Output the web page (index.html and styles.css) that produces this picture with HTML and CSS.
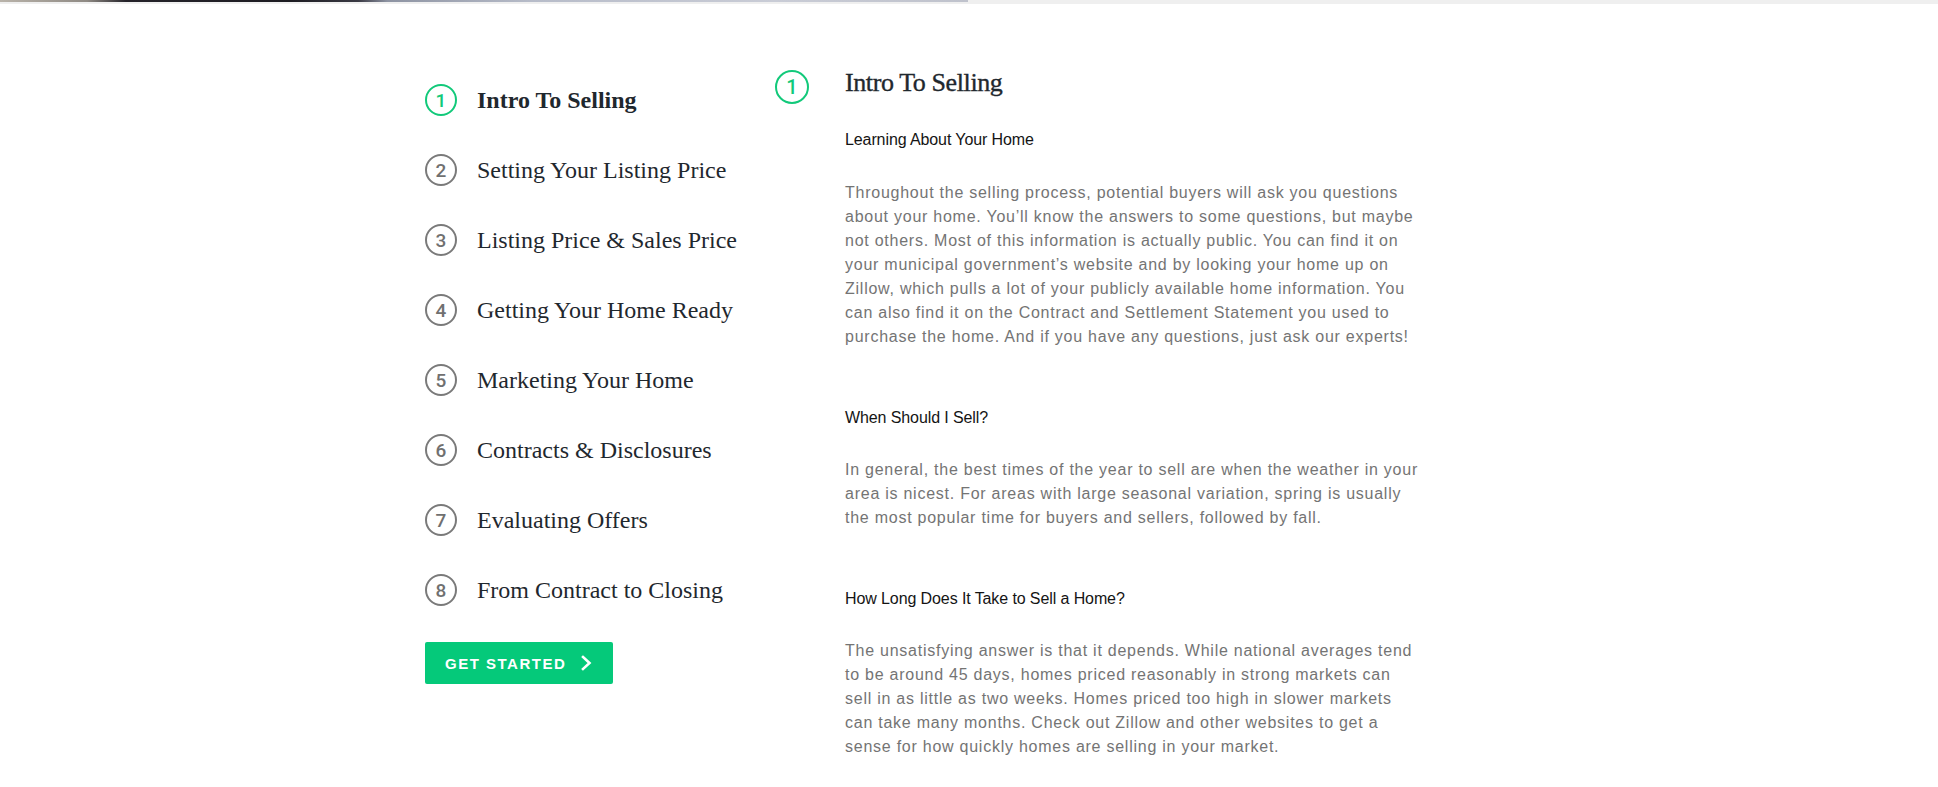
FILE: index.html
```html
<!DOCTYPE html>
<html lang="en">
<head>
<meta charset="utf-8">
<title>Intro To Selling</title>
<link rel="stylesheet" href="styles.css">
</head>
<body>
<div class="topbar"><div class="topbar-strip"></div></div>
<main class="page">
  <aside class="sidebar">
    <ol class="steps">
      <li class="step step-active"><span class="num">1</span><span class="step-label">Intro To Selling</span></li>
      <li class="step"><span class="num">2</span><span class="step-label">Setting Your Listing Price</span></li>
      <li class="step"><span class="num">3</span><span class="step-label">Listing Price &amp; Sales Price</span></li>
      <li class="step"><span class="num">4</span><span class="step-label">Getting Your Home Ready</span></li>
      <li class="step"><span class="num">5</span><span class="step-label">Marketing Your Home</span></li>
      <li class="step"><span class="num">6</span><span class="step-label">Contracts &amp; Disclosures</span></li>
      <li class="step"><span class="num">7</span><span class="step-label">Evaluating Offers</span></li>
      <li class="step"><span class="num">8</span><span class="step-label">From Contract to Closing</span></li>
    </ol>
    <a class="btn" href="#">GET STARTED
      <svg class="chev" width="11" height="16" viewBox="0 0 11 16"><path d="M2 2 L8.5 8 L2 14" fill="none" stroke="#fff" stroke-width="2.6" stroke-linecap="square"/></svg>
    </a>
  </aside>
  <section class="content">
    <span class="num num-lg num-active">1</span>
    <div class="article">
      <h1 class="title">Intro To Selling</h1>
      <h2 class="sub">Learning About Your Home</h2>
      <p class="para">Throughout the selling process, potential buyers will ask you questions about your home. You’ll know the answers to some questions, but maybe not others. Most of this information is actually public. You can find it on your municipal government’s website and by looking your home up on Zillow, which pulls a lot of your publicly available home information. You can also find it on the Contract and Settlement Statement you used to purchase the home. And if you have any questions, just ask our experts!</p>
      <h2 class="sub">When Should I Sell?</h2>
      <p class="para">In general, the best times of the year to sell are when the weather in your area is nicest. For areas with large seasonal variation, spring is usually the most popular time for buyers and sellers, followed by fall.</p>
      <h2 class="sub">How Long Does It Take to Sell a Home?</h2>
      <p class="para">The unsatisfying answer is that it depends. While national averages tend to be around 45 days, homes priced reasonably in strong markets can sell in as little as two weeks. Homes priced too high in slower markets can take many months. Check out Zillow and other websites to get a sense for how quickly homes are selling in your market.</p>
    </div>
  </section>
</main>
</body>
</html>
```
FILE: styles.css
```css
* { box-sizing: border-box; }
html, body { margin: 0; padding: 0; background: #fff; }
body { font-family: "Liberation Sans", Arial, sans-serif; color: #222; }

.topbar { height: 4px; background: #efefef; }
.topbar-strip {
  width: 968px; height: 2px;
  background: linear-gradient(90deg, #b9b3aa 0%, #8f8a84 9%, #25232a 13%, #1d1c22 30%, #3a3a44 37%, #8d93a2 40%, #b7bcc9 55%, #c9ccd6 80%, #bfc2cc 100%);
}

.page {
  width: 1088px;
  margin: 0 auto;
  display: flex;
  padding-top: 61px;
}

.sidebar { width: 350px; flex: none; }

.steps { list-style: none; margin: 0; padding: 0; }
.step {
  height: 70px;
  display: flex;
  align-items: center;
  gap: 20px;
}
.step-label {
  font-family: "Liberation Serif", "Times New Roman", serif;
  font-size: 24px;
  color: #1f282e;
}
.step-active .step-label { font-weight: bold; }

.num {
  width: 32px; height: 32px;
  flex: none;
  border: 2px solid #7a7a7a;
  border-radius: 50%;
  display: flex; align-items: center; justify-content: center;
  font-family: Roboto, "Liberation Sans", Arial, sans-serif;
  font-weight: 500;
  font-size: 19px;
  color: #707070;
  line-height: 1;
}
.step-active .num, .num-active { border-color: #12c97a; color: #12c97a; }
.num-lg { width: 34px; height: 34px; font-size: 20px; }

.btn {
  margin-top: 17px;
  display: inline-flex;
  align-items: center;
  gap: 15px;
  height: 42px;
  padding: 0 21px 0 20px;
  background: #05c97a;
  border-radius: 2px;
  color: #fff;
  text-decoration: none;
  font-family: "Liberation Sans", Arial, sans-serif;
  font-weight: bold;
  font-size: 15px;
  letter-spacing: 1.5px;
}
.chev { display: block; }

.content {
  display: flex;
  gap: 36px;
  align-items: flex-start;
  padding-top: 5px;
}
.article { width: 574px; }

.title {
  margin: 0;
  font-family: "Liberation Serif", "Times New Roman", serif;
  font-weight: normal;
  font-size: 26px;
  line-height: 32px;
  letter-spacing: -0.4px;
  color: #1f282e;
  -webkit-text-stroke: 0.35px #1f282e;
  margin-top: -3px;
}
.sub {
  margin: 29px 0 0;
  font-family: "Liberation Sans", Arial, sans-serif;
  font-weight: normal;
  font-size: 16px;
  letter-spacing: -0.1px;
  line-height: 24px;
  color: #141414;
}
.para + .sub { margin-top: 57px; }
.para {
  margin: 28px 0 0;
  font-family: "Liberation Sans", Arial, sans-serif;
  font-size: 16px;
  line-height: 24px;
  letter-spacing: 0.75px;
  color: #747474;
}
.title + .sub + .para { margin-top: 29px; }
```
